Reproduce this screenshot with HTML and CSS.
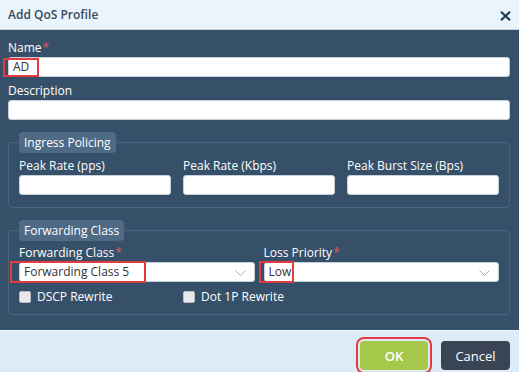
FILE: index.html
```html
<!DOCTYPE html>
<html>
<head>
<meta charset="utf-8">
<link rel="stylesheet" href="styles.css">
</head>
<body>
<div class="dialog">
  <div class="header">
    <span class="title">Add QoS Profile</span>
    <svg class="close" width="11" height="10" viewBox="0 0 11 10"><path d="M1 0.8 L10 9.2 M10 0.8 L1 9.2" stroke="#1d3955" stroke-width="2.2" fill="none"/></svg>
  </div>
  <div class="body">
    <div class="field">
      <div class="label">Name<span class="req">*</span></div>
      <div class="ctl">
        <div class="input">AD</div>
        <span class="mark mark-name"></span>
      </div>
    </div>
    <div class="field">
      <div class="label">Description</div>
      <div class="input"></div>
    </div>
    <fieldset class="group">
      <legend>Ingress Policing</legend>
      <div class="grid3">
        <div><div class="label">Peak Rate (pps)</div><div class="input"></div></div>
        <div><div class="label">Peak Rate (Kbps)</div><div class="input"></div></div>
        <div><div class="label">Peak Burst Size (Bps)</div><div class="input"></div></div>
      </div>
    </fieldset>
    <fieldset class="group group2">
      <legend>Forwarding Class</legend>
      <div class="grid2">
        <div>
          <div class="label">Forwarding Class<span class="req">*</span></div>
          <div class="ctl">
            <div class="input select">Forwarding Class 5<svg class="chev" width="11" height="6" viewBox="0 0 11 6"><polyline points="0.5,0.5 5.5,5.5 10.5,0.5" stroke="#a9aeb4" stroke-width="1" fill="none"/></svg></div>
            <span class="mark mark-fc"></span>
          </div>
        </div>
        <div>
          <div class="label">Loss Priority<span class="req">*</span></div>
          <div class="ctl">
            <div class="input select">Low<svg class="chev" width="11" height="6" viewBox="0 0 11 6"><polyline points="0.5,0.5 5.5,5.5 10.5,0.5" stroke="#a9aeb4" stroke-width="1" fill="none"/></svg></div>
            <span class="mark mark-lp"></span>
          </div>
        </div>
      </div>
      <div class="checks">
        <label class="check"><span class="box"></span>DSCP Rewrite</label>
        <label class="check"><span class="box"></span>Dot 1P Rewrite</label>
      </div>
    </fieldset>
  </div>
  <div class="footer">
    <button class="btn ok">OK</button>
    <button class="btn cancel">Cancel</button>
  </div>
</div>
</body>
</html>
```
FILE: styles.css
```css
html, body {
  margin: 0;
  padding: 0;
  background: #ffffff;
}
body {
  font-family: "Open Sans", "Noto Sans", sans-serif;
  font-size: 12px;
  color: #ffffff;
}
.dialog {
  width: 519px;
  height: 372px;
  display: flex;
  flex-direction: column;
}
.header {
  height: 29px;
  background: #eaf4fd;
  border-bottom: 1px solid #c3d1de;
  display: flex;
  align-items: center;
  justify-content: space-between;
  padding: 0 8px 0 8px;
}
.title {
  font-size: 12px;
  font-weight: 600;
  color: #3a4a5a;
}
.close {
  display: block;
  margin-top: 2px;
}
.body {
  flex: 1;
  background: #375069;
  padding: 10px 9px 0 8px;
}
.field {
  margin-bottom: 6px;
}
.label {
  line-height: 16px;
  margin-bottom: 1px;
  color: #ffffff;
  white-space: nowrap;
}
.req {
  color: #e0585e;
  margin-left: 1px;
}
.ctl {
  position: relative;
}
.input {
  height: 20px;
  box-sizing: border-box;
  background: #ffffff;
  border: 1px solid #c5d0da;
  border-radius: 3px;
  color: #333333;
  line-height: 18px;
  padding: 0 4px;
  position: relative;
}
.select .chev {
  position: absolute;
  right: 8px;
  top: 7px;
}
.mark {
  position: absolute;
  border: 2px solid #e23c40;
  box-sizing: border-box;
  pointer-events: none;
}
.mark-name {
  left: -5px;
  top: 1px;
  width: 36px;
  height: 19px;
}
.mark-fc {
  left: -9px;
  top: -1px;
  width: 136px;
  height: 22px;
}
.mark-lp {
  left: -5px;
  top: -1px;
  width: 35px;
  height: 22px;
}
.group {
  margin: 12px 0 0 0;
  padding: 0 10px 12px 10px;
  border: 1px solid #4a6580;
  border-radius: 4px;
  min-width: 0;
}
.group2 {
  padding-bottom: 11px;
}
.group legend {
  background: #4e6a85;
  border-radius: 4px;
  height: 21px;
  line-height: 21px;
  padding: 0 5px;
  font-size: 12px;
  color: #ffffff;
}
.grid3 {
  display: grid;
  grid-template-columns: 1fr 1fr 1fr;
  column-gap: 12px;
  margin-top: 5px;
}
.grid2 {
  display: grid;
  grid-template-columns: 1fr 1fr;
  column-gap: 9px;
  margin-top: 4px;
}
.checks {
  display: grid;
  grid-template-columns: 164px 1fr;
  margin-top: 8px;
}
.check {
  display: flex;
  align-items: center;
  height: 13px;
}
.box {
  width: 12px;
  height: 12px;
  box-sizing: border-box;
  background: #e8e9ea;
  border: 1px solid #b9bdc2;
  border-radius: 2px;
  margin-right: 6px;
}
.footer {
  height: 42px;
  box-sizing: border-box;
  background: #dcebf6;
  border-top: 1px solid #eef6fc;
  display: flex;
  justify-content: flex-end;
  align-items: flex-start;
  padding: 10px 9px 0 0;
  gap: 13px;
}
.btn {
  height: 29px;
  width: 68px;
  border: none;
  border-radius: 4px;
  color: #ffffff;
  font-family: "Open Sans", "Noto Sans", sans-serif;
  font-size: 13px;
  padding: 0;
}
.ok {
  background: #a6c94c;
  font-weight: 600;
  outline: 2px solid #e23c40;
  outline-offset: 2px;
}
.cancel {
  background: #394454;
  width: 69px;
}
```
